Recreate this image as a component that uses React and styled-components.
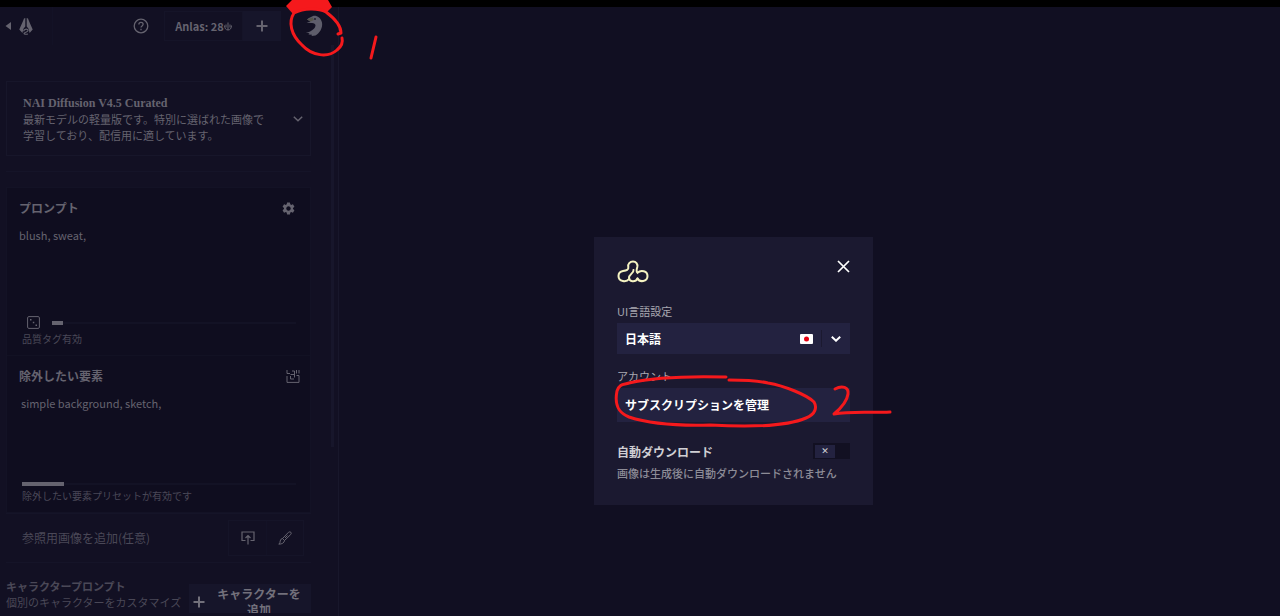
import React from "react";
import styled, { createGlobalStyle } from "styled-components";
import { MdSettings } from "react-icons/md";

const GlobalStyle = createGlobalStyle`
  *, *::before, *::after { box-sizing: border-box; }
  body { margin: 0; background: #000; }
  body, button, select, textarea, input {
    font-family: "Noto Sans CJK JP", "Noto Sans", sans-serif;
    font-size: 12px;
    line-height: 16px;
  }
  button, select, textarea, input { margin: 0; padding: 0; border: 0; border-radius: 0; color: inherit; background: none; }
  h1, h2, p { margin: 0; font-size: inherit; }
  svg { display: block; flex: none; }
`;

const Page = styled.div`
  position: relative;
  display: flex;
  height: 100vh;
  padding-top: 7px;
  overflow: hidden;
  color: #65636f;
`;

const Sidebar = styled.aside`
  display: flex;
  flex: none;
  flex-direction: column;
  width: 339px;
  overflow: hidden;
  background: #121023;
  border-right: 1px solid #18172b;
`;

const Canvas = styled.main`
  flex: 1;
  background: #110f22;
`;

const TopBar = styled.header`
  display: flex;
  flex: none;
  align-items: center;
  height: 38px;
  padding-left: 5px;
`;

const HomeButton = styled.button`
  display: flex;
  align-items: center;
  gap: 8px;
  height: 38px;
  width: 48px;
  border-right: 1px solid #131226;
`;

const HelpButton = styled.button`
  margin-left: auto;
  padding: 0 15px;
`;

const Anlas = styled.div`
  display: flex;
  align-items: center;
  justify-content: center;
  width: 79px;
  height: 30px;
  border: 1px solid #151428;
  font-size: 11px;
  font-weight: 700;
`;

const AddButton = styled.button`
  display: grid;
  place-items: center;
  width: 38px;
  height: 30px;
  background: #16152a;
`;

const Avatar = styled.button`
  margin: 0 15px 0 24px;
`;

const Body = styled.div`
  display: flex;
  flex: 1;
  min-height: 0;
  padding-left: 6px;
`;

const Column = styled.div`
  flex: 1;
  min-width: 0;
  margin: 0 20px 3px 0;
  overflow: hidden;
`;

const ScrollThumb = styled.div`
  width: 3px;
  height: 402px;
  margin-right: 4px;
  background: #17162b;
`;

const ModelCard = styled.button`
  display: flex;
  align-items: center;
  justify-content: space-between;
  width: 100%;
  height: 75px;
  margin-top: 36px;
  padding: 0 7px 0 16px;
  border: 1px solid #17162a;
  text-align: left;
  font-size: 11px;
`;

const ModelName = styled.strong`
  display: block;
  font-family: "Liberation Serif", serif;
  font-size: 12px;
`;

const ModelText = styled.span`
  display: block;
  width: 244px;
`;

const Divider = styled.div`
  height: 1px;
  margin: 15px 0;
  background: #151428;
`;

const PromptPanel = styled.section`
  border: 1px solid #131225;
  background: #0f0d1f;
`;

const PromptBlock = styled.div`
  display: flex;
  flex-direction: column;
  height: ${(p) => p.$height};
  padding: 12px 10px 0 12px;
  & + & { border-top: 1px solid #121123; }
`;

const PromptHead = styled.div`
  display: flex;
  align-items: center;
  justify-content: space-between;
  padding-right: ${(p) => p.$end || "0"};
`;

const Title = styled.label`
  font-size: 12px;
  font-weight: 700;
`;

const PromptText = styled.textarea`
  flex: 1;
  min-height: 0;
  margin-top: 11px;
  padding-left: ${(p) => p.$indent || "0"};
  resize: none;
  outline: 0;
  overflow: hidden;
  font-size: 11px;
`;

const Usage = styled.div`
  display: flex;
  align-items: center;
  gap: 12px;
  padding: 0 4px 0 ${(p) => p.$indent || "3px"};
`;

const Meter = styled.div`
  flex: 1;
  height: 4px;
  background: linear-gradient(#131225, #131225) center / 100% 2px no-repeat;
`;

const MeterFill = styled.div`
  width: ${(p) => p.$value};
  height: 4px;
  background: #65636f;
`;

const Note = styled.p`
  padding: 2px 0 8px 3px;
  color: #4a4857;
  font-size: 10px;
`;

const ReferenceRow = styled.section`
  display: flex;
  align-items: center;
  justify-content: space-between;
  height: 50px;
  padding: 0 7px 0 16px;
  border: solid #151428;
  border-width: 1px 0;
  color: #4a4857;
`;

const ButtonPair = styled.div`
  display: flex;
  border: 1px solid #151428;
  color: #65636f;
`;

const IconButton = styled.button`
  display: grid;
  place-items: center;
  width: 37px;
  height: 34px;
  & + & { border-left: 1px solid #131226; }
`;

const CharacterRow = styled.section`
  display: flex;
  align-items: flex-start;
  justify-content: space-between;
  margin-top: 15px;
  color: #4a4857;
  font-size: 11px;
  white-space: nowrap;
`;

const AddCharacter = styled.button`
  display: flex;
  align-items: center;
  justify-content: space-between;
  width: 122px;
  height: 36px;
  margin-top: 6px;
  padding: 0 9px 0 4px;
  background: #16152a;
  color: #72707b;
  font-weight: 700;
  white-space: normal;
  span { width: 86px; }
`;

const Overlay = styled.div`
  position: absolute;
  inset: 0;
  display: flex;
  align-items: center;
  justify-content: center;
  padding: 126px 0 0 187px;
`;

const Dialog = styled.div`
  display: flex;
  flex-direction: column;
  width: 279px;
  padding: 23px;
  background: #1b1930;
  color: #fff;
`;

const DialogHead = styled.div`
  display: flex;
  align-items: flex-start;
  justify-content: space-between;
  height: 43px;
`;

const FieldLabel = styled.label`
  padding-bottom: 4px;
  color: #a9a8b1;
  font-size: 11px;
`;

const SelectBox = styled.div`
  display: grid;
  grid-template-columns: 1fr auto auto;
  align-items: center;
  height: 31px;
  margin-bottom: 14px;
  background: #232240;
  & > * { grid-row: 1; }
`;

const Select = styled.select`
  grid-column: 1 / -1;
  width: 100%;
  height: 31px;
  padding-left: 8px;
  appearance: none;
  outline: 0;
  font-weight: 700;
`;

const Flag = styled.svg`
  grid-column: 2;
  margin-right: 8px;
  pointer-events: none;
`;

const Arrow = styled.span`
  grid-column: 3;
  display: grid;
  place-items: center;
  width: 29px;
  height: 17px;
  border-left: 1px solid #1b1930;
  pointer-events: none;
`;

const ManageButton = styled.button`
  height: 34px;
  padding-left: 8px;
  background: #232240;
  font-weight: 700;
  text-align: left;
`;

const SwitchRow = styled.div`
  display: flex;
  align-items: flex-start;
  justify-content: space-between;
  margin-top: 21px;
`;

const SwitchLabel = styled.label`
  padding-top: 1px;
  color: #d0cfd4;
  font-weight: 700;
`;

const Switch = styled.input`
  display: flex;
  align-items: center;
  width: 37px;
  height: 16px;
  padding-left: 2px;
  appearance: none;
  background: #121022;
  &::before {
    content: "✕";
    width: 20px;
    height: 13px;
    background: #232240;
    color: #d0cfd4;
    font-family: "DejaVu Sans", sans-serif;
    font-size: 9px;
    font-weight: 700;
    line-height: 13px;
    text-align: center;
  }
`;

const Hint = styled.p`
  padding: 5px 0 1px;
  color: #8d8c97;
  font-size: 11px;
  font-weight: 500;
  white-space: nowrap;
`;

const Ink = styled.svg`
  position: absolute;
  top: 0;
  left: 0;
  pointer-events: none;
`;

const Plus = () => (
  <svg width="12" height="12" viewBox="0 0 12 12" stroke="currentColor" strokeWidth="2"><path d="M6 0.5v11M0.5 6h11" /></svg>
);

const Chevron = ({ weight }) => (
  <svg width="10" height="6" viewBox="0 0 10 6" fill="none" stroke="currentColor" strokeWidth={weight}><path d="M0.8 0.8 5 4.7 9.2 0.8" /></svg>
);

export default function App() {
  return (
    <Page>
      <GlobalStyle />
      <Sidebar>
        <TopBar>
          <HomeButton aria-label="Home">
            <svg width="6" height="8" viewBox="0 0 6 8" fill="currentColor"><path d="M6 0v8L0.5 4Z" /></svg>
            <svg width="14" height="17" viewBox="0 0 14 17" fill="currentColor">
              <path d="M5 0.5 6.3 0V8.5L4.6 10.5 3.4 15 0.3 11.5C1.8 8 3.7 4 5 0.5ZM9 0.5 7.7 0V8.5L9.4 10.5 10.6 15 13.7 11.5C12.2 8 10.3 4 9 0.5Z" />
              <path d="M4.500 13.200C5.500 10.500 9 10.800 9 12.500 9 14 6.500 13.700 5.200 15.200 4.800 16.300 6.500 16.500 9 16" fill="none" stroke="currentColor" strokeWidth="1.2" />
            </svg>
          </HomeButton>
          <HelpButton aria-label="Help">
            <svg width="16" height="16" viewBox="0 0 16 16" fill="none" stroke="currentColor" strokeWidth="1.3">
              <circle cx="8" cy="8" r="6.8" />
              <path d="M5.9 6.4C5.9 3.7 10.1 3.7 10.1 6.3 10.1 7.9 8 7.9 8 9.6M8 10.8v1.4" />
            </svg>
          </HelpButton>
          <Anlas>
            Anlas: 28
            <svg width="8" height="9" viewBox="0 0 8 9" fill="none" stroke="currentColor"><path d="M4 0.5v7.5M2 2.500v3M6 2.500v3M0.500 3.500C0.500 6.500 2 8 4 8S7.500 6.500 7.500 3.500" /></svg>
          </Anlas>
          <AddButton aria-label="Add"><Plus /></AddButton>
          <Avatar aria-label="Account">
            <svg width="18" height="22" viewBox="0 0 18 22">
              <path d="M2 4.500C4 2.500 6 2 8 1 12 0.300 15.500 2.500 17 7.500 18 13 14.500 18 10.500 20.500L6.500 21 7 19.800 3.500 19.500 4.500 18.300 0.800 17.800C5 17 10 14.500 10.500 10.500 10.500 9 9 8.300 7 8L1.500 7.800 5.500 6.500Z" fill="#5e5d6b" />
              <path d="M2 4.500 7.500 2.500 9 5 5.500 6.500Z" fill="#55544a" />
              <circle cx="10" cy="4" r="0.900" fill="#1a192a" />
            </svg>
          </Avatar>
        </TopBar>
        <Body>
          <Column>
            <ModelCard>
              <ModelText>
                <ModelName>NAI Diffusion V4.5 Curated</ModelName>
                最新モデルの軽量版です。特別に選ばれた画像で学習しており、配信用に適しています。
              </ModelText>
              <Chevron weight="1.5" />
            </ModelCard>
            <Divider />
            <PromptPanel>
              <PromptBlock $height="167px">
                <PromptHead $end="4px">
                  <Title htmlFor="prompt">プロンプト</Title>
                  <button aria-label="Prompt settings"><MdSettings size={15} /></button>
                </PromptHead>
                <PromptText id="prompt" defaultValue="blush, sweat," />
                <Usage $indent="8px">
                  <svg width="13" height="13" viewBox="0 0 13 13" fill="none" stroke="currentColor">
                    <rect x="0.6" y="0.6" width="11.8" height="11.8" rx="1.3" />
                    <path d="M3 3.7h1.5M5.8 6.5h1.5M8.5 9.3H10" strokeWidth="1.5" />
                  </svg>
                  <Meter><MeterFill $value="11px" /></Meter>
                </Usage>
                <Note>品質タグ有効</Note>
              </PromptBlock>
              <PromptBlock $height="157px">
                <PromptHead>
                  <Title htmlFor="undesired">除外したい要素</Title>
                  <button aria-label="Presets">
                    <svg width="14" height="13" viewBox="0 0 14 13" fill="none" stroke="currentColor">
                      <path d="M1 0v3.500H4M1 6v6.400h12V5.500H10.500M13 0v3.500M6 1h2.500v6.500M10.500 0v3.500M4.500 6v3H8M4.500 4.500h4" />
                    </svg>
                  </button>
                </PromptHead>
                <PromptText id="undesired" $indent="2px" defaultValue="simple background, sketch," />
                <Usage><Meter><MeterFill $value="42px" /></Meter></Usage>
                <Note>除外したい要素プリセットが有効です</Note>
              </PromptBlock>
            </PromptPanel>
            <ReferenceRow>
              参照用画像を追加(任意)
              <ButtonPair>
                <IconButton aria-label="Upload">
                  <svg width="14" height="14" viewBox="0 0 14 14" fill="none" stroke="currentColor" strokeWidth="1.2">
                    <path d="M4.5 9.5H1V1h12v8.5H9.5M7 13.5V4.5M4.5 7 7 4.5 9.5 7" />
                  </svg>
                </IconButton>
                <IconButton aria-label="Draw">
                  <svg width="14" height="14" viewBox="0 0 14 14" fill="none" stroke="currentColor">
                    <path d="M4.5 7.5 10.5 1.3Q12 0.3 12.9 1.3 13.7 2.2 12.7 3.5L6.5 9.5ZM4.5 7.5 6.5 9.5M6.5 9.5Q6 13 0.8 13.2 2.3 12 2.2 10 2.5 7.8 4.5 7.5M7 7l2.5-2.5" />
                  </svg>
                </IconButton>
              </ButtonPair>
            </ReferenceRow>
            <CharacterRow>
              <div>
                <h2>キャラクタープロンプト</h2>
                <p>個別のキャラクターをカスタマイズ</p>
              </div>
              <AddCharacter><Plus /><span>キャラクターを追加</span></AddCharacter>
            </CharacterRow>
          </Column>
          <ScrollThumb />
        </Body>
      </Sidebar>
      <Canvas />
      <Overlay>
        <Dialog role="dialog" aria-modal="true" aria-label="設定">
          <DialogHead>
            <svg width="32" height="24" viewBox="0 0 32 24" fill="none" stroke="#f5f3c2" strokeWidth="2" strokeLinecap="round">
              <path d="M12 19C9.500 22.500 1.500 22 1.500 16 1.500 13 3.500 11.500 6 11 9.500 10.500 11.800 10 11.300 7 10.500 4 13 1.500 16 1.500S21 4 20.300 7C19.500 9.500 19 11.500 20.500 12.800 24 9.500 30.500 11 30.500 16 30.500 22 22.500 22.500 20.500 18.500" />
              <path d="M16.500 10C17 13 12 14.500 12 17.500 12 22 18.500 22.500 20.500 18.500" />
            </svg>
            <button aria-label="閉じる">
              <svg width="13" height="13" viewBox="0 0 13 13" stroke="#fff" strokeWidth="1.7"><path d="M1 1l11 11M12 1 1 12" /></svg>
            </button>
          </DialogHead>
          <FieldLabel htmlFor="language">UI言語設定</FieldLabel>
          <SelectBox>
            <Select id="language" defaultValue="ja"><option value="ja">日本語</option></Select>
            <Flag width="13" height="10" viewBox="0 0 13 10"><rect width="13" height="10" rx="1" fill="#fff" /><circle cx="6.5" cy="5" r="2.5" fill="#e60012" /></Flag>
            <Arrow><Chevron weight="2" /></Arrow>
          </SelectBox>
          <FieldLabel as="p">アカウント</FieldLabel>
          <ManageButton>サブスクリプションを管理</ManageButton>
          <SwitchRow>
            <SwitchLabel htmlFor="auto-download">自動ダウンロード</SwitchLabel>
            <Switch id="auto-download" type="checkbox" />
          </SwitchRow>
          <Hint>画像は生成後に自動ダウンロードされません</Hint>
        </Dialog>
      </Overlay>
      <Ink width="1280" height="616" viewBox="0 0 1280 616" fill="none" stroke="#f5191c" strokeWidth="3" strokeLinecap="round" strokeLinejoin="round">
        <path d="M286 6 292 0H328L332 7 326 13C319 8 303 7 293 14Z" fill="#f5191c" stroke="none" />
        <path d="M326 12C318 8 304 8 294 13 288 22 291 35 302 45 312 56 328 58 337 50 342 46 343 42 342 38M326 12C334 18 341 26 341 33L338 34" />
        <path d="M376 37 371 58" />
        <path d="M726 377C690 376 655 377 629 383C624 385 620 383 617 391 614 406 619 413 629 417 650 424 675 426 710 425 745 427 785 427 806 418 816 414 817 407 814 402 807 395 785 386 768 383 755 380 742 380 729 380" />
        <path d="M835 389C842 385 849 387 848 394 847 402 840 409 834 414 850 411 870 413 890 412" />
      </Ink>
    </Page>
  );
}
